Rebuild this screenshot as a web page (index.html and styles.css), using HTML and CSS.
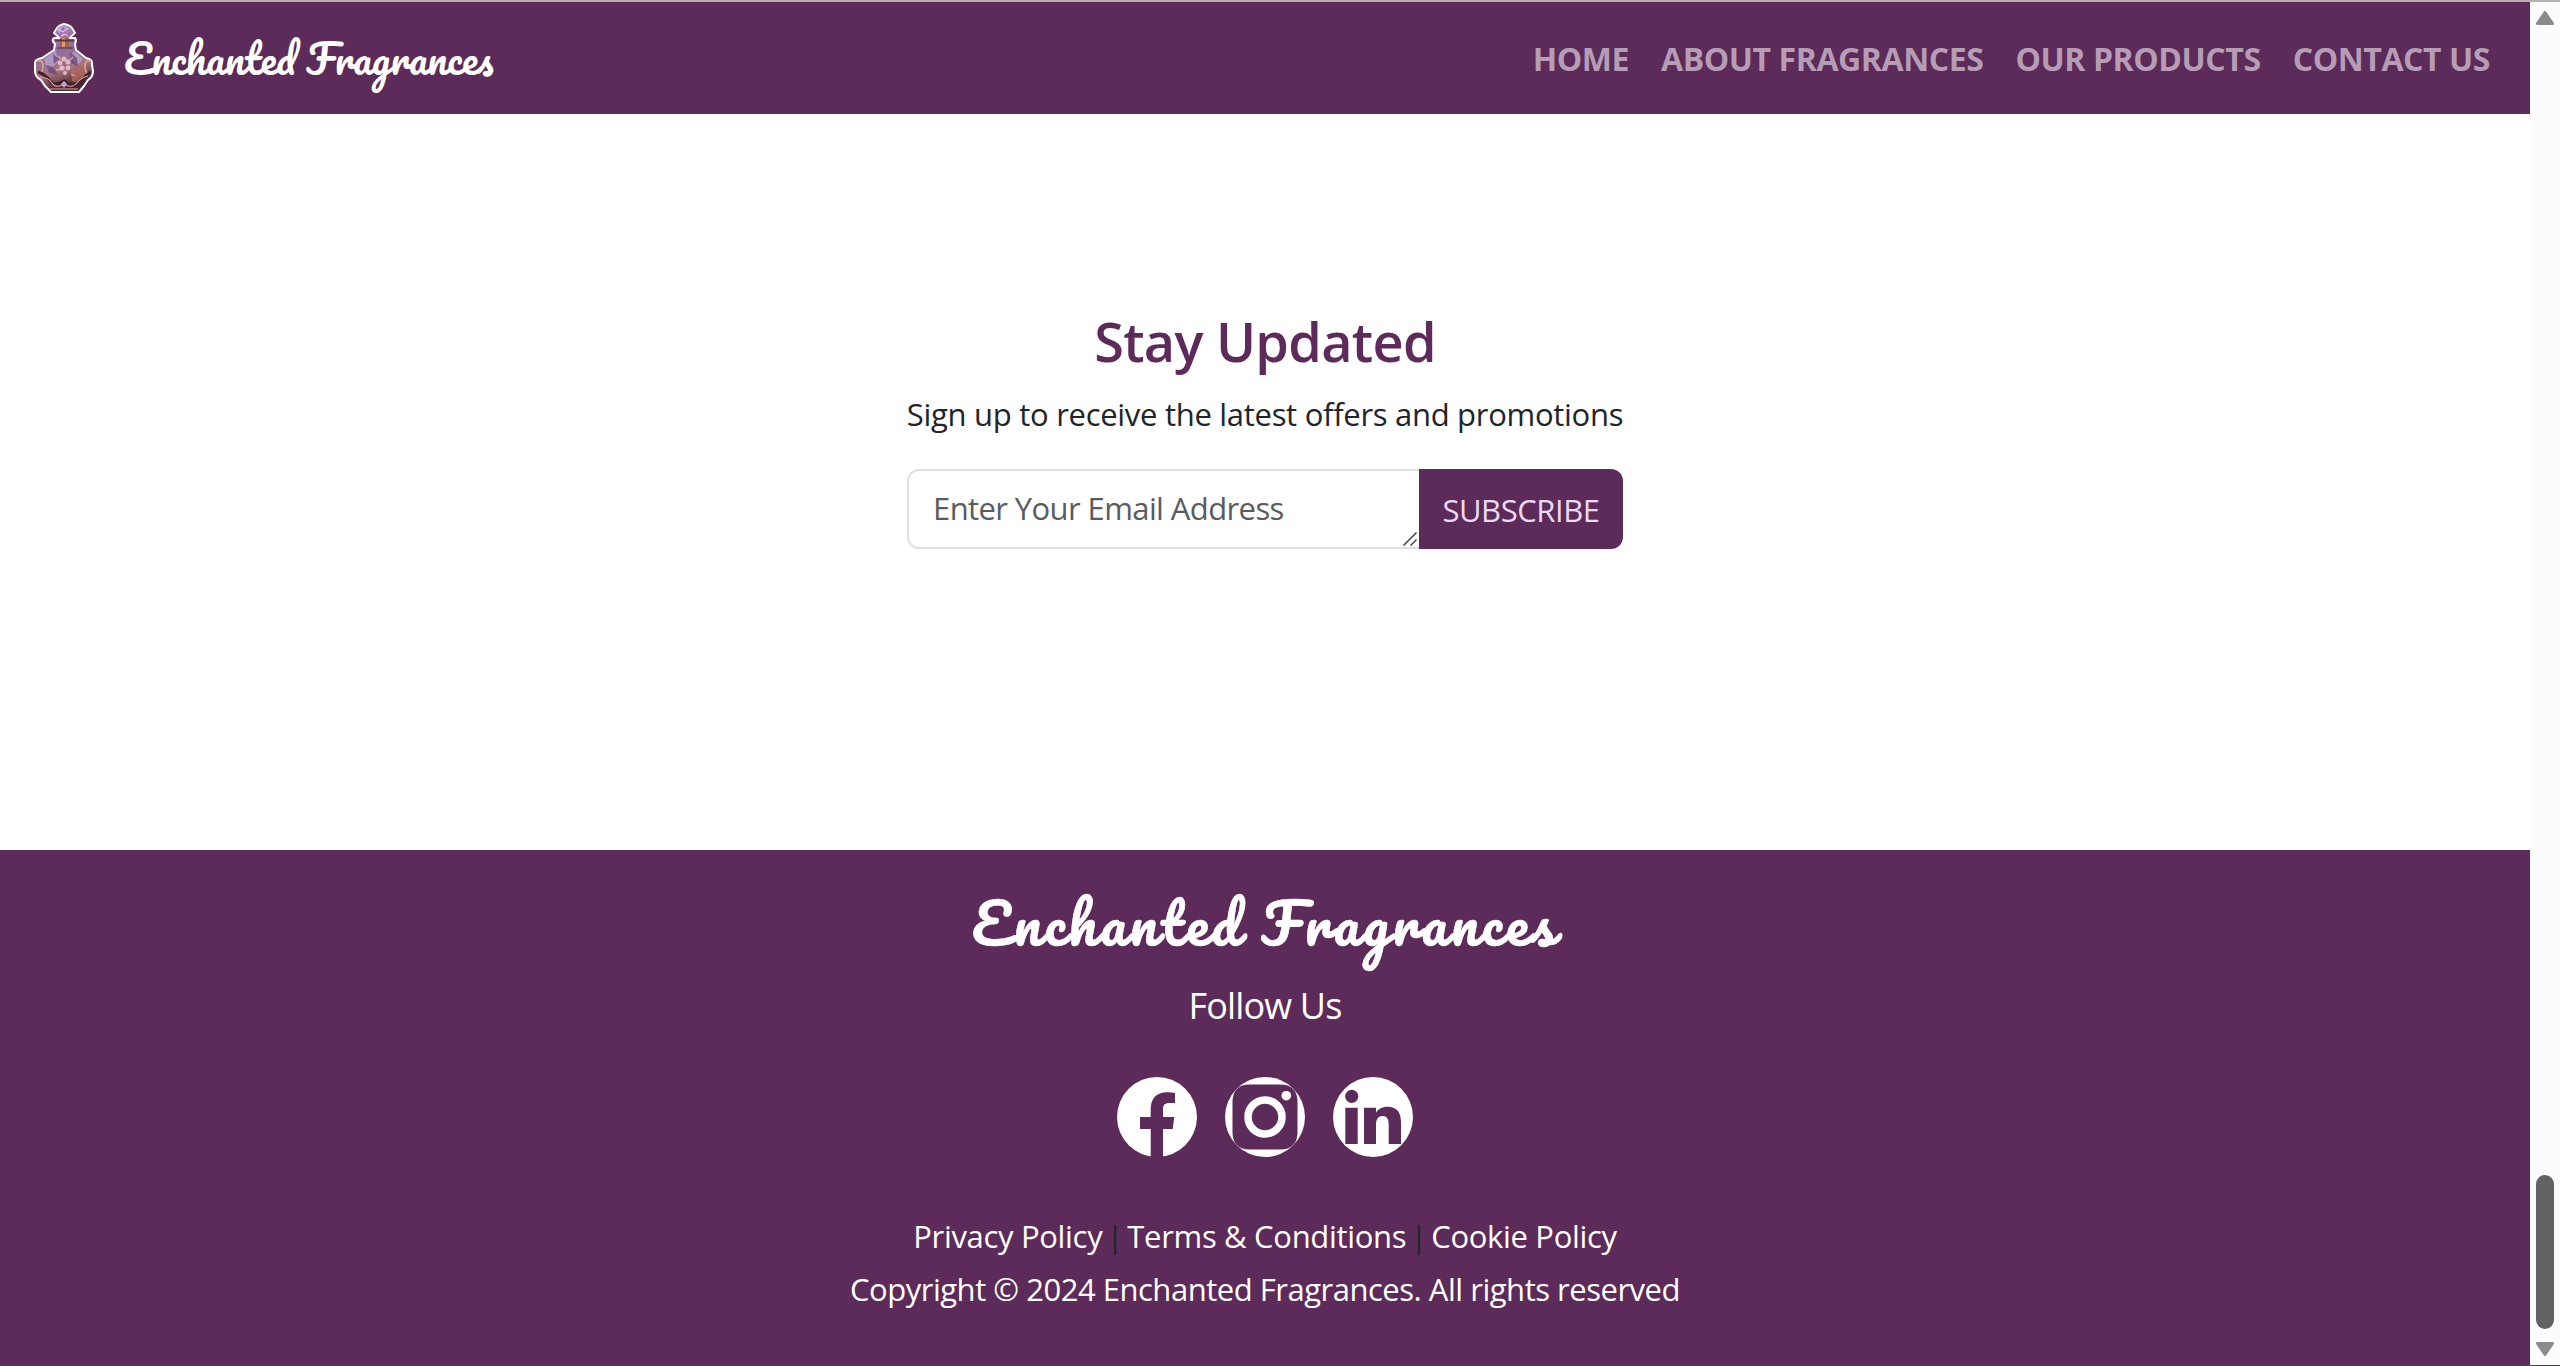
FILE: index.html
```
<!DOCTYPE html>
<html lang="en">
<head>
<meta charset="utf-8">
<title>Enchanted Fragrances</title>
<link rel="stylesheet" href="styles.css">
</head>
<body>
<div class="page">
  <header class="navbar">
    <a class="brand" href="#">
      <svg class="bottle" width="60" height="70" viewBox="0 0 60 70" aria-hidden="true">
        <defs>
          <linearGradient id="glass" x1="0" y1="0" x2="0.25" y2="1">
            <stop offset="0" stop-color="#a996bd"/><stop offset=".45" stop-color="#8d6da3"/><stop offset=".75" stop-color="#a5737d"/><stop offset="1" stop-color="#4a2430"/>
          </linearGradient>
          <linearGradient id="cap" x1="0" y1="0" x2="1" y2="1">
            <stop offset="0" stop-color="#d3b3e2"/><stop offset="1" stop-color="#8c5c93"/>
          </linearGradient>
        </defs>
        <path d="M30 1 Q36 2 38 5 L41 10 35 15 41 15 Q43 17 41 21 L42 27 52 35 Q59 36 58 42 L59 48 Q59 54 54 57 L50 63 45 69H17L11 63 7 57Q1 54 1 48L1 42Q0 36 8 35L20 27 21 21Q17 17 20 15L26 15 20 10 23 5Q25 2 30 1z" fill="url(#glass)" stroke="#fff" stroke-width="2" stroke-linejoin="round"/>
        <path d="m30 2 6 3 3.500 5-5.500 5h-7l-6-5 3-6z" fill="url(#cap)"/>
        <path d="m22 8 4 5 3-8 4 8 4-5" fill="none" stroke="#9566ad" stroke-width="1.100"/>
        <path d="m24 6 5 3 5-4M27 13l4-2 3 2" fill="none" stroke="#f0dcf2" stroke-width="1"/>
        <path d="M26 15h9v9h-9z" fill="#a2604d"/><path d="M28 15h3v9h-3z" fill="#d89a78"/>
        <path d="M21 17.500h19" stroke="#5d3545" stroke-width="2"/><path d="M23 25h16" stroke="#6d3c48" stroke-width="1.500"/>
        <path d="m22 27-12 9 4 12 10-9zM40 28l9 8-5 6-8-8z" fill="#b9a4cf" opacity=".75"/>
        <path d="m36 29 7 6 1 9-8-5zM12 42l7 2 5 8-9-2zM19 31l6 5-5 5z" fill="#674177" opacity=".7"/>
        <path d="M37 48l12-7 4 11-8 9-7-3z" fill="#b46b5c" opacity=".75"/>
        <g fill="#e0bac6"><circle cx="30" cy="36" r="2.500"/><circle cx="26" cy="40" r="2.400"/><circle cx="34" cy="39" r="2.500"/><circle cx="28" cy="45" r="2.600"/><circle cx="34" cy="45" r="2.400"/><circle cx="31" cy="50" r="2"/></g>
        <circle cx="30.500" cy="41.500" r="1.700" fill="#a8677e"/>
        <path d="m24 33 3 3M39 34l-3 3M22 47l4-1M37 51l4 2" stroke="#d4a9b8" stroke-width="1.300"/>
        <path d="M3 38q6-2 6 5t-4 8M57 38q-6-2-6 5t4 8" fill="none" stroke="#d7a08d" stroke-width="1.800"/>
        <path d="M4 49q8 3 12 9t14 0q8 7 14 2t12-11" fill="none" stroke="#3f1d2c" stroke-width="3"/>
        <path d="M6 54q8 0 12 6t12 1q8 5 13-1t11-7M16 66h28" fill="none" stroke="#d7a493" stroke-width="1.100"/>
        <path d="m27 61 3-3 3 3-3 4z" fill="#c8a4d0"/>
      </svg>
      <span class="brand-name">Enchanted Fragrances</span>
    </a>
    <nav class="nav">
      <a href="#">HOME</a><a href="#">ABOUT FRAGRANCES</a><a href="#">OUR PRODUCTS</a><a href="#">CONTACT US</a>
    </nav>
  </header>

  <main class="updates">
    <h2>Stay Updated</h2>
    <p class="lead">Sign up to receive the latest offers and promotions</p>
    <form class="signup">
      <div class="field">
        <textarea rows="1" placeholder="Enter Your Email Address"></textarea>
        <svg class="grip" width="14" height="14" viewBox="0 0 14 14"><path d="M.5 13.500l13-13M7.500 13.500l6-6"/></svg>
      </div>
      <button type="button">SUBSCRIBE</button>
    </form>
  </main>

  <footer class="footer">
    <h3>Enchanted Fragrances</h3>
    <p class="follow">Follow Us</p>
    <div class="social">
      <svg viewBox="0 0 80 80" aria-label="Facebook"><circle cx="40" cy="40" r="40" fill="#fff"/><path class="cut" d="M33.7 81V52H23V40h10.7v-7.500C33.700 21.500 39.500 15.300 50 15.300c3.500 0 6 .3 8 .7v10h-5.500c-5 0-6.500 2.200-6.500 6V40h11.300l-1.600 12H46v29z"/></svg>
      <svg viewBox="0 0 80 80" aria-label="Instagram"><circle cx="40" cy="40" r="40" fill="#fff"/><path class="cut" d="M25 7.500h30Q72.500 7.500 72.500 25v30Q72.500 72.500 55 72.500H25Q7.500 72.500 7.500 55V25Q7.500 7.500 25 7.500z"/><circle cx="40" cy="40" r="17" fill="none" stroke="#fff" stroke-width="7.500"/><circle cx="61.300" cy="18.700" r="4.800" fill="#fff"/></svg>
      <svg viewBox="0 0 80 80" aria-label="LinkedIn"><circle cx="40" cy="40" r="40" fill="#fff"/><circle class="cut" cx="18.700" cy="19.300" r="6.600"/><path class="cut" d="M12.300 30.700h12.400V67H12.300zM31 30.700h12v5c2-3.500 6-6 11.500-6C64.500 29.700 68 36 68 45.500V67H55.700V48c0-5-1-9-6-9-5.200 0-6.700 4-6.700 9v19H31z"/></svg>
    </div>
    <p class="links"><a href="#">Privacy Policy</a><span>|</span><a href="#">Terms &amp; Conditions</a><span>|</span><a href="#">Cookie Policy</a></p>
    <p class="copyright">Copyright © 2024 Enchanted Fragrances. All rights reserved</p>
  </footer>
</div>
<div class="scrollbar">
  <svg width="18" height="14" viewBox="0 0 18 14"><path d="M9 1.500 16.500 12.500H1.500z"/></svg>
  <div class="thumb"></div>
  <svg width="18" height="14" viewBox="0 0 18 14"><path d="M1.500 1.500h15L9 12.500z"/></svg>
</div>
</body>
</html>
```
FILE: styles.css
```
* { box-sizing: border-box; }
body {
  margin: 0;
  height: 1366px;
  display: flex;
  overflow: hidden;
  border-top: 2px solid #b7b0b0;
  border-bottom: 1px solid #4b4048;
  background: #fff;
  color: #212529;
  font: 400 31px/48px "Segoe UI", "Open Sans", sans-serif;
}
h2, h3, p { margin: 0; white-space: nowrap; }
a { color: inherit; text-decoration: none; white-space: nowrap; }
.page { flex: 1; display: flex; flex-direction: column; }

.navbar {
  height: 112px;
  padding: 0 24px 0 34px;
  display: flex;
  align-items: center;
  justify-content: space-between;
  background: #5c2b59;
}
.brand { display: flex; align-items: center; gap: 30px; }
.bottle { display: block; }
.brand-name { color: #fff; font: 400 40px/60px "Pacifico", cursive; }
.nav { display: flex; padding-top: 1px; color: #b69db5; font-size: 32px; font-weight: 700; letter-spacing: -0.42px; }
.nav a { padding: 0 16px; }

.updates {
  height: 736px;
  padding-top: 194px;
  display: flex;
  flex-direction: column;
  align-items: center;
}
.updates h2 { color: #5c2b59; font-size: 54px; font-weight: 600; line-height: 67px; letter-spacing: -0.7px; }
.lead { margin-top: 15px; letter-spacing: -0.29px; }
.signup { display: flex; width: 716px; height: 80px; margin-top: 31px; }
.field { position: relative; flex: 1; display: flex; }
.field textarea {
  flex: 1;
  min-width: 0;
  margin: 0;
  padding: 13px 24px;
  border: 2px solid #dee2e6;
  border-right: 0;
  border-radius: 12px 0 0 12px;
  background: #fff;
  font: inherit;
  letter-spacing: -0.6px;
  overflow: hidden;
  resize: none;
}
.field textarea::placeholder { color: #595c5f; opacity: 1; }
.grip { position: absolute; right: 2px; bottom: 3px; fill: none; stroke: #555; stroke-width: 1.6; }
.signup button {
  width: 204px;
  padding: 1px 0 0;
  border: 0;
  border-radius: 0 12px 12px 0;
  background: #5c2b59;
  color: #ecd9f5;
  font: inherit;
  letter-spacing: -0.45px;
}

.footer {
  flex: 1;
  padding-top: 34px;
  display: flex;
  flex-direction: column;
  align-items: center;
  background: #5c2b59;
  color: #fff;
}
.footer h3 { font: 400 56px/77px "Pacifico", cursive; letter-spacing: 3.3px; -webkit-text-stroke: 0.6px #fff; }
.follow { margin-top: 18px; font-size: 36px; line-height: 54px; letter-spacing: -0.85px; }
.social { display: flex; gap: 28px; margin-top: 44px; }
.social svg { width: 80px; height: 80px; }
.cut { fill: #5c2b59; }
.links { display: flex; margin-top: 53px; line-height: 53px; letter-spacing: -0.32px; }
.links span { width: 25px; text-align: center; color: #212529; }
.copyright { line-height: 53px; letter-spacing: -0.48px; }

.scrollbar { width: 30px; padding: 9px 0; display: flex; flex-direction: column; align-items: center; background: #fcfcfc; }
.scrollbar path { fill: #8b8b8b; stroke: #8b8b8b; stroke-width: 3; stroke-linejoin: round; }
.thumb { width: 18px; height: 154px; margin: auto 0 13px; border-radius: 9px; background: #636363; }
```
